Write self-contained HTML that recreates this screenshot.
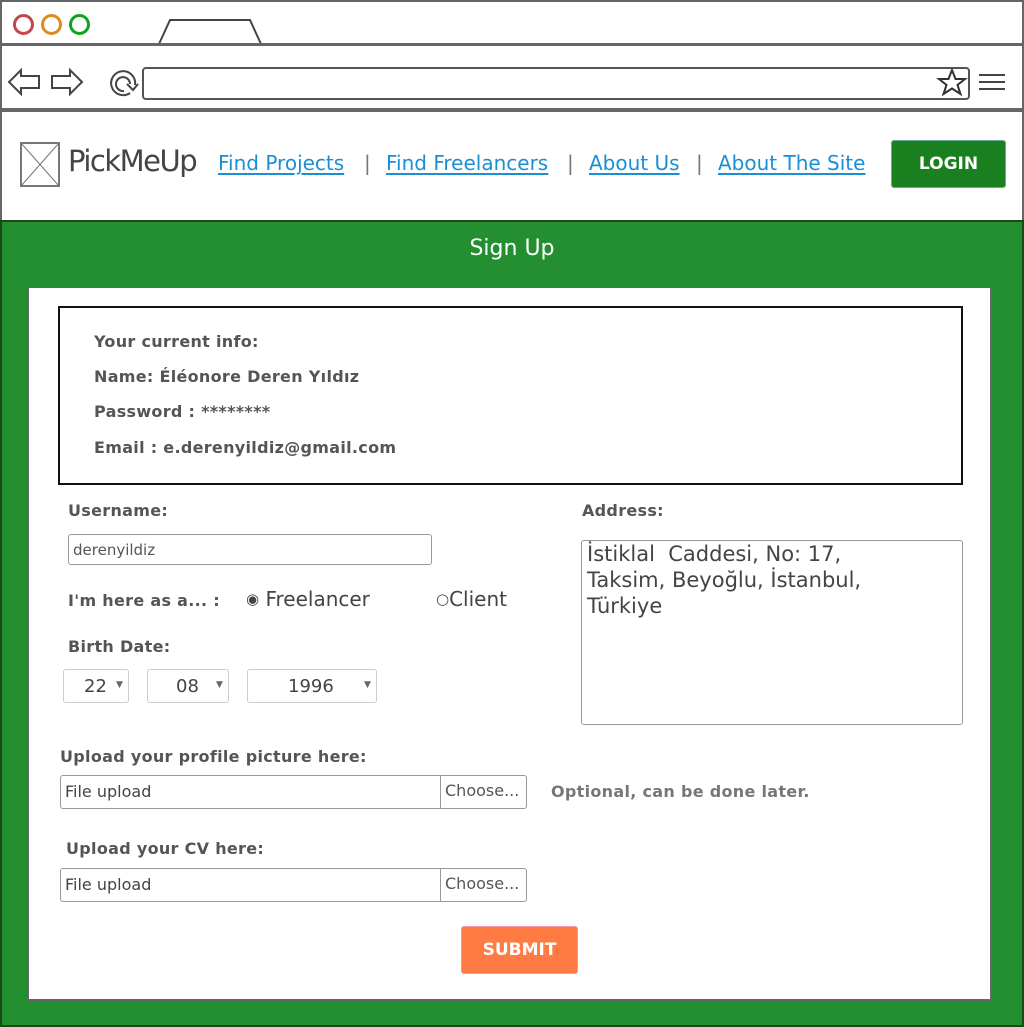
<!DOCTYPE html>
<html><head><meta charset="utf-8"><style>
*{margin:0;padding:0;box-sizing:border-box}
body{width:1024px;height:1027px;position:relative;overflow:hidden;background:#fff;font-family:"DejaVu Sans","Liberation Sans",sans-serif}
.a{position:absolute}
.lbl{position:absolute;font-weight:bold;font-size:16px;letter-spacing:0.3px;color:#555}
.lnk{position:absolute;top:151px;font-size:20px;color:#1a8fd6;text-decoration:underline;text-decoration-thickness:2px;text-underline-offset:3px;font-family:"DejaVu Sans",sans-serif}
.sep{position:absolute;top:151px;font-size:20px;color:#777}
.box{position:absolute;border:1px solid #999;border-radius:3px;background:#fff}
.sel{position:absolute;border:1px solid #ccc;border-radius:3px;height:34px;top:669px;font-size:18px;color:#444}
.sel span{position:absolute;top:6px}
.sel i{position:absolute;top:10px;font-style:normal;font-size:9px;color:#666}
</style></head><body>
<div class="a" style="left:0;top:0;width:1024px;height:112px;border:2px solid #666;border-bottom:none"></div>
<div class="a" style="left:13px;top:14px;width:21px;height:21px;border:3px solid #c0474c;border-radius:50%"></div>
<div class="a" style="left:41px;top:14px;width:21px;height:21px;border:3px solid #dd8a1f;border-radius:50%"></div>
<div class="a" style="left:69px;top:14px;width:21px;height:21px;border:3px solid #11a31b;border-radius:50%"></div>
<svg class="a" style="left:0;top:0" width="1024" height="112">
<path d="M159 44 L170 20 L250 20 L261 44" fill="none" stroke="#444" stroke-width="2"/>
<rect x="0" y="43" width="1024" height="3" fill="#666"/>
<rect x="0" y="108" width="1024" height="4" fill="#666"/>
<path d="M9 82 L21 70 L21 76 L39 76 L39 88 L21 88 L21 94 Z" fill="none" stroke="#444" stroke-width="2"/>
<path d="M82 82 L70 70 L70 76 L52 76 L52 88 L70 88 L70 94 Z" fill="none" stroke="#444" stroke-width="2"/>
<path d="M130 93 A12 12 0 1 1 135 85 M124 91 A7 7 0 1 1 130 84 M127 84 L133 90 L138 84" fill="none" stroke="#444" stroke-width="2"/>
<rect x="143" y="68" width="826" height="31" rx="3" fill="none" stroke="#555" stroke-width="2"/>
<path d="M952 70 L955.5 79 L965 79 L957.5 85 L960.5 94 L952 88.5 L943.5 94 L946.5 85 L939 79 L948.5 79 Z" fill="none" stroke="#333" stroke-width="2"/>
<path d="M979 75 H1005 M979 82 H1005 M979 89 H1005" stroke="#444" stroke-width="2"/>
</svg>
<div class="a" style="left:0;top:112px;width:1024px;height:110px;border-left:2px solid #666;border-right:2px solid #666"></div>
<svg class="a" style="left:20px;top:142px" width="40" height="45"><rect x="1" y="1" width="38" height="43" fill="none" stroke="#777" stroke-width="2"/><path d="M1 1 L39 44 M39 1 L1 44" stroke="#777"/></svg>
<div class="a" style="left:68px;top:144px;font-family:'Comic Sans MS','DejaVu Sans',sans-serif;font-size:29px;color:#444;letter-spacing:-1.5px">PickMeUp</div>
<div class="lnk" style="left:218px">Find Projects</div>
<div class="sep" style="left:364px">|</div>
<div class="lnk" style="left:386px">Find Freelancers</div>
<div class="sep" style="left:567px">|</div>
<div class="lnk" style="left:589px">About Us</div>
<div class="sep" style="left:696px">|</div>
<div class="lnk" style="left:718px">About The Site</div>
<div class="a" style="left:891px;top:140px;width:115px;height:48px;background:#1a7f1e;border:1px solid #6a9;border-radius:3px;color:#fff;font-weight:bold;font-size:17px;text-align:center;line-height:46px">LOGIN</div>
<div class="a" style="left:0;top:220px;width:1024px;height:807px;background:#238f30;border:2px solid #1a4a1a"></div>
<div class="a" style="left:0;top:236px;width:1024px;text-align:center;color:#fff;font-size:22px;font-family:'Comic Sans MS','DejaVu Sans',sans-serif">Sign Up</div>
<div class="a" style="left:28px;top:287px;width:964px;height:714px;background:#fff;border:1px solid #666;border-bottom:2px solid #666;border-right:2px solid #666"></div>
<div class="a" style="left:58px;top:306px;width:905px;height:179px;border:2px solid #111"></div>
<div class="lbl" style="left:94px;top:332px">Your current info:</div>
<div class="lbl" style="left:94px;top:367px">Name: Éléonore Deren Yıldız</div>
<div class="lbl" style="left:94px;top:402px">Password : ********</div>
<div class="lbl" style="left:94px;top:438px">Email : e.derenyildiz@gmail.com</div>
<div class="lbl" style="left:68px;top:501px">Username:</div>
<div class="box" style="left:68px;top:534px;width:364px;height:31px;font-size:15px;color:#555;padding:6px 4px">derenyildiz</div>
<div class="lbl" style="left:68px;top:591px">I'm here as a... :</div>
<div class="a" style="left:246px;top:587px;font-size:20px;color:#444"><span style="font-size:15px;position:relative;top:-2px">◉</span> Freelancer</div>
<div class="a" style="left:436px;top:587px;font-size:20px;color:#444"><span style="font-size:15px;position:relative;top:-2px">○</span>Client</div>
<div class="lbl" style="left:68px;top:637px">Birth Date:</div>
<div class="sel" style="left:63px;width:66px"><span style="left:20px">22</span><i style="left:52px">▼</i></div>
<div class="sel" style="left:147px;width:82px"><span style="left:28px">08</span><i style="left:68px">▼</i></div>
<div class="sel" style="left:247px;width:130px"><span style="left:40px">1996</span><i style="left:116px">▼</i></div>
<div class="lbl" style="left:582px;top:501px">Address:</div>
<div class="box" style="left:581px;top:540px;width:382px;height:185px;font-size:21px;color:#444;padding:0 5px;line-height:26px">İstiklal&nbsp; Caddesi, No: 17,<br>Taksim, Beyoğlu, İstanbul,<br>Türkiye</div>
<div class="lbl" style="left:60px;top:747px">Upload your profile picture here:</div>
<div class="box" style="left:60px;top:775px;width:467px;height:34px;font-size:16px;color:#444;padding:6px 4px">File upload<div class="a" style="left:379px;top:0;height:32px;border-left:1px solid #999;padding:5px 4px;font-size:16px;color:#555">Choose...</div></div>
<div class="lbl" style="left:551px;top:782px;color:#777">Optional, can be done later.</div>
<div class="lbl" style="left:66px;top:839px">Upload your CV here:</div>
<div class="box" style="left:60px;top:868px;width:467px;height:34px;font-size:16px;color:#444;padding:6px 4px">File upload<div class="a" style="left:379px;top:0;height:32px;border-left:1px solid #999;padding:5px 4px;font-size:16px;color:#555">Choose...</div></div>
<div class="a" style="left:461px;top:926px;width:117px;height:48px;background:#ff7b43;border:1px solid #e9a;border-radius:3px;color:#fff;font-weight:bold;font-size:17px;text-align:center;line-height:46px">SUBMIT</div>
</body></html>
